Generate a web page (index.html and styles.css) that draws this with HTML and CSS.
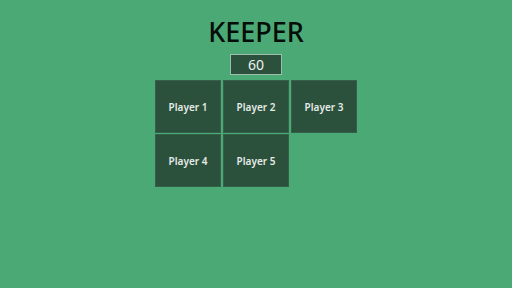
FILE: index.html
```html
<!DOCTYPE html>
<html>
<head>
<meta charset="utf-8">
<link rel="stylesheet" href="styles.css">
</head>
<body>
<main class="app">
  <h1 class="title">KEEPER</h1>
  <div class="timer">60</div>
  <div class="players">
    <div class="player">Player 1</div>
    <div class="player">Player 2</div>
    <div class="player">Player 3</div>
    <div class="player">Player 4</div>
    <div class="player">Player 5</div>
  </div>
</main>
</body>
</html>
```
FILE: styles.css
```css
html, body {
  margin: 0;
  padding: 0;
  width: 512px;
  height: 288px;
  background: #4aa974;
  font-family: "Open Sans", "Noto Sans", sans-serif;
  overflow: hidden;
}
.app {
  display: flex;
  flex-direction: column;
  align-items: center;
}
.title {
  margin: 14px 0 0 0;
  font-family: "Noto Sans", "Open Sans", sans-serif;
  font-size: 27px;
  font-weight: 500;
  line-height: 36px;
  color: #050d08;
}
.timer {
  margin-top: 4px;
  box-sizing: border-box;
  width: 52px;
  height: 21px;
  border: 1px solid #9fbfae;
  background: #2b513d;
  color: #f0f0f0;
  font-family: "Noto Sans", "Open Sans", sans-serif;
  font-size: 14px;
  line-height: 19px;
  text-align: center;
}
.players {
  margin-top: 5px;
  display: grid;
  grid-template-columns: repeat(3, 66px);
  grid-auto-rows: 53px;
  gap: 1px 2px;
}
.player {
  box-sizing: border-box;
  border: 1px solid #34604a;
  background: #2b513d;
  color: #e6ebe7;
  font-family: "Noto Sans", "Open Sans", sans-serif;
  font-size: 10px;
  font-weight: 600;
  display: flex;
  align-items: center;
  justify-content: center;
}
```
